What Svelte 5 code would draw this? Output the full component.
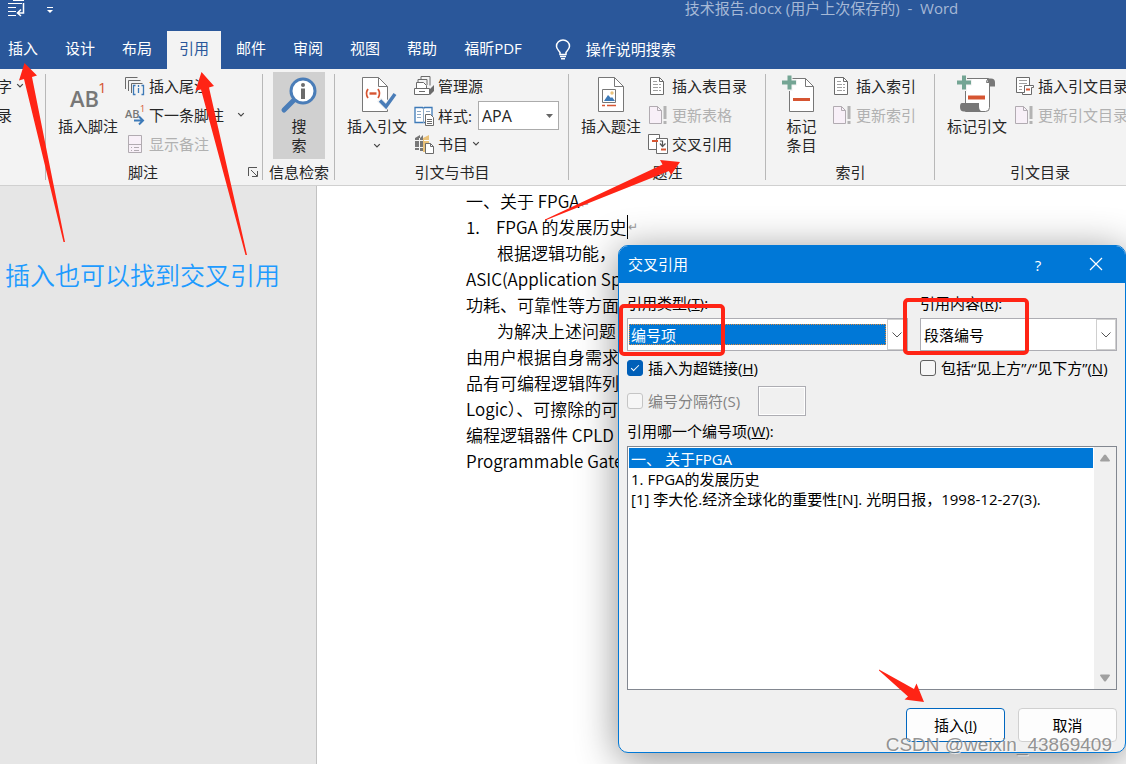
<script lang="ts">
	const tabs = ['插入', '设计', '布局', '引用', '邮件', '审阅', '视图', '帮助', '福昕PDF'];
	let activeTab = $state('引用');

	const items = [
		'一、 关于FPGA',
		'1. FPGA的发展历史',
		'[1] 李大伦.经济全球化的重要性[N]. 光明日报，1998-12-27(3).'
	];
	let selectedItem = $state(items[0]);

	let style = $state('APA');
	let refType = $state('编号项');
	let refContent = $state('段落编号');
	let asLink = $state(true);
	let withPosition = $state(false);
	let open = $state(true);

	function close() {
		open = false;
	}
</script>

{#snippet caret()}
	<svg class="caret" width="8" height="6" viewBox="0 0 8 6" aria-hidden="true">
		<path d="M1.2 1.2 4 4l2.800-2.800" fill="none" stroke="#444" stroke-width="1.200" />
	</svg>
{/snippet}

{#snippet pageIcon()}
	<svg width="20" height="20" viewBox="0 0 20 20" aria-hidden="true">
		<path d="M2.500 1.500h9l4 4v13h-13z" fill="#fff" stroke="#6b6b6b" />
		<path d="M11.500 1.500v4h4" fill="none" stroke="#6b6b6b" />
		<path d="M5 5.500h4M5 8.500h5M5 11.500h5M5 14.500h5M11 8.500h2M11 11.500h2M11 14.500h2" stroke="#a0a0a0" />
	</svg>
{/snippet}

{#snippet updateIcon()}
	<svg width="20" height="20" viewBox="0 0 20 20" aria-hidden="true">
		<path d="M1.500 1.500h8l4 4v13h-12z" fill="#f8f0f8" stroke="#b1abb1" />
		<path d="M9.500 1.500v4h4" fill="none" stroke="#b1abb1" />
		<path d="M15.500 1h3v13h-3zM15.500 16h3v3h-3z" fill="#b3b3b3" />
	</svg>
{/snippet}

<div class="word">
	<header>
		<div class="titlebar">
			<svg width="18" height="17" viewBox="0 0 18 17" aria-hidden="true">
				<path d="M5 .5h11M0 3.500h14M0 7.500h8M0 11.500h8M0 15.500h8" stroke="#fff" />
				<path d="M15.500 3v10h-5M13 9.500 9.500 13l3.500 3" fill="none" stroke="#fff" stroke-width="1.500" />
			</svg>
			<svg class="qat" width="8" height="8" viewBox="0 0 8 8" aria-hidden="true">
				<path d="M1 1.500h6" stroke="#fff" />
				<path d="M1 4h6L4 7z" fill="#fff" />
			</svg>
			<span class="title">技术报告.docx (用户上次保存的)&nbsp; -&nbsp; Word</span>
		</div>
		<nav>
			{#each tabs as tab}
				<button type="button" class="tab" class:active={tab === activeTab} onclick={() => (activeTab = tab)}>{tab}</button>
			{/each}
			<button type="button" class="tell-me">
				<svg width="16" height="21" viewBox="0 0 16 21" aria-hidden="true">
					<path d="M5 15.500v-2C3.500 11 1.500 10 1.500 7.200a6.500 6.200 0 0 1 13 0c0 2.800-2 3.800-3.500 6.300v2z" fill="none" stroke="#fff" stroke-width="1.500" />
					<path d="M5 17.500h6M6 19.700h4" stroke="#fff" stroke-width="1.500" />
				</svg>
				操作说明搜索
			</button>
		</nav>
	</header>

	<div class="ribbon">
		<section class="group cut">
			<div class="tools">
				<div class="small-col">
					<button type="button" class="small">字 {@render caret()}</button>
					<button type="button" class="small">录</button>
				</div>
			</div>
		</section>

		<section class="group">
			<div class="tools">
				<button type="button" class="large">
					<svg width="36" height="38" viewBox="0 0 36 38" aria-hidden="true">
						<text x="0" y="31" class="ab">AB</text>
						<text x="28" y="17" class="one">1</text>
					</svg>
					<span>插入脚注</span>
				</button>
				<div class="small-col">
					<button type="button" class="small">
						<svg width="20" height="20" viewBox="0 0 20 20" aria-hidden="true">
							<path d="M.5 13V1.500h12M3.500 15V4.500h12M6.500 17V7.500h11" fill="none" stroke="#6b6b6b" />
							<path d="M10.500 9.500h-2v9h2M16.500 9.500h2v9h-2M13.500 9v2M13.500 12v5" fill="none" stroke="#3d7ab8" stroke-width="1.300" />
						</svg>
						插入尾注
					</button>
					<button type="button" class="small">
						<svg width="20" height="20" viewBox="0 0 20 20" aria-hidden="true">
							<text x="0" y="13" class="ab-small">AB</text>
							<text x="15" y="7" class="one-small">1</text>
							<path d="M9 15.500h9M14 11.500l4 4-4 4" fill="none" stroke="#3d7ab8" stroke-width="2" />
						</svg>
						下一条脚注
						<span class="far">{@render caret()}</span>
					</button>
					<button type="button" class="small" disabled>
						<svg width="20" height="20" viewBox="0 0 20 20" aria-hidden="true">
							<path d="M3.500 1.500h13v17h-13zM3.500 10.500h13" fill="#f8f0f8" stroke="#b1abb1" />
							<path d="M6 13.500h1M9 13.500h5M6 16.500h1M9 16.500h5" stroke="#b1abb1" />
						</svg>
						显示备注
					</button>
				</div>
			</div>
			<div class="label with-launcher">
				<h2>脚注</h2>
				<button type="button" class="launcher" aria-label="脚注">
					<svg width="10" height="10" viewBox="0 0 10 10" aria-hidden="true">
						<path d="M.5 9V.5H9M3 3l6 6M9.500 4v5.500H4" fill="none" stroke="#555" />
					</svg>
				</button>
			</div>
		</section>

		<section class="group search-group">
			<div class="tools">
				<button type="button" class="large search">
					<svg width="38" height="38" viewBox="0 0 38 38" aria-hidden="true">
						<path d="M4 34 15 23" stroke="#4a7db8" stroke-width="5" stroke-linecap="round" />
						<circle cx="23" cy="15" r="12" fill="#fff" stroke="#4a7db8" stroke-width="3" />
						<circle cx="23" cy="9" r="2" fill="#6b6b6b" />
						<path d="M23 12.500v10.500" stroke="#6b6b6b" stroke-width="4" />
					</svg>
					<span>搜<br />索</span>
				</button>
			</div>
			<div class="label"><h2>信息检索</h2></div>
		</section>

		<section class="group">
			<div class="tools">
				<button type="button" class="large">
					<svg width="38" height="38" viewBox="0 0 38 38" aria-hidden="true">
						<path d="M4.500 1.500h16l9 9v25h-25z" fill="#fff" stroke="#777" />
						<path d="M20.500 1.500v9h9" fill="none" stroke="#777" />
						<path d="M10 13q-3 4.500 0 9M20 13q3 4.500 0 9" fill="none" stroke="#d65532" stroke-width="1.800" />
						<path d="M11.500 17.500h7" stroke="#d65532" stroke-width="2.400" />
						<path d="M21 23.500 28 30.500l10-13" fill="none" stroke="#f3f3f3" stroke-width="6" />
						<path d="M22 24.500 28 30.500l9-12.500" fill="none" stroke="#4a7db8" stroke-width="3.500" />
					</svg>
					<span>插入引文</span>
					{@render caret()}
				</button>
				<div class="small-col">
					<button type="button" class="small">
						<svg width="20" height="20" viewBox="0 0 20 20" aria-hidden="true">
							<path d="M7 3.500V.5h9v9M4 6V3.500h9V9" fill="none" stroke="#6b6b6b" />
							<path d="M2.500 12.500v-6h7l3 3v3" fill="#fff" stroke="#6b6b6b" />
							<path d="M.5 12.500h15v6H.5zM5 15.500h6" fill="#fff" stroke="#6b6b6b" />
							<path d="m16 13 4-4v6l-4 4z" fill="#6b6b6b" />
						</svg>
						管理源
					</button>
					<div class="small style-row">
						<svg width="20" height="20" viewBox="0 0 20 20" aria-hidden="true">
							<path d="M1 1.500h7.500l1 1 1-1H18v15H1z" fill="#fff" stroke="#3d7ab8" stroke-width="1.300" />
							<path d="M9.500 2v15M3 5.500h4M3 8.500h4M3 11.500h4M12 5.500h4" stroke="#8ea9c4" />
							<path d="M11.500 8.500h5l3 3v8h-8z" fill="#fff" stroke="#6b6b6b" />
							<path d="M13 13.500h5M13 15.500h5M13 17.500h5" stroke="#6b6b6b" />
						</svg>
						<label for="style">样式:</label>
						<div class="style-box">
							<select id="style" bind:value={style}>
								<option>APA</option>
							</select>
							<svg width="7" height="4" viewBox="0 0 7 4" aria-hidden="true"><path d="M0 0h7L3.500 4z" fill="#666" /></svg>
						</div>
					</div>
					<button type="button" class="small">
						<svg width="20" height="20" viewBox="0 0 20 20" aria-hidden="true">
							<path d="m1 4 5-3v15H1zM6 4l3-3v16H6z" fill="#777" />
							<path d="M1 6.500h8M1 13.500h8M5.500 4v12" stroke="#f3f3f3" />
							<path d="m9 4 6-3v17H9z" fill="#eac27a" />
							<path d="M10 6.500h5" stroke="#fff" />
							<path d="M11.500 9.500h5l3 3v7h-8z" fill="#fff" stroke="#6b6b6b" />
							<path d="M16.500 9.500v3h3" fill="none" stroke="#6b6b6b" />
						</svg>
						书目 {@render caret()}
					</button>
				</div>
			</div>
			<div class="label"><h2>引文与书目</h2></div>
		</section>

		<section class="group">
			<div class="tools">
				<button type="button" class="large">
					<svg width="38" height="38" viewBox="0 0 38 38" aria-hidden="true">
						<path d="M6.500 1.500h16l9 9v25h-25z" fill="#fff" stroke="#777" />
						<path d="M22.500 1.500v9h9" fill="none" stroke="#777" />
						<path d="M10.500 13.500h13v13h-13z" fill="#fff" stroke="#777" />
						<circle cx="20" cy="17" r="1.700" fill="#eac27a" />
						<path d="m12 25 4-6 3 3 1-1 3 4z" fill="#3d7ab8" />
						<path d="M10 29.500h3M15 29.500h9" stroke="#d65532" stroke-width="1.300" />
					</svg>
					<span>插入题注</span>
				</button>
				<div class="small-col">
					<button type="button" class="small">{@render pageIcon()}插入表目录</button>
					<button type="button" class="small" disabled>{@render updateIcon()}更新表格</button>
					<button type="button" class="small" onclick={() => (open = true)}>
						<svg width="20" height="20" viewBox="0 0 20 20" aria-hidden="true">
							<path d="M.5.5h11v15H.5z" fill="#fff" stroke="#6b6b6b" />
							<path d="M8.500 4.500h11v15h-11z" fill="#fff" stroke="#6b6b6b" />
							<path d="M4 7h6" stroke="#d65532" stroke-width="2" />
							<path d="M12 7h2.500v5M12 9.500l2.500 3 3-3" fill="none" stroke="#555" stroke-width="1.200" />
							<path d="M13 15.500h5" stroke="#d65532" stroke-width="2" />
						</svg>
						交叉引用
					</button>
				</div>
			</div>
			<div class="label"><h2>题注</h2></div>
		</section>

		<section class="group">
			<div class="tools">
				<button type="button" class="large narrow">
					<svg width="38" height="38" viewBox="0 0 38 38" aria-hidden="true">
						<path d="M6.500 2.500h16l8 8v25h-24z" fill="#fff" stroke="#777" />
						<path d="M22.500 2.500v8h8" fill="none" stroke="#777" />
						<path d="M10 23.500h17" stroke="#d65532" stroke-width="3" />
						<path d="M-1 6.500h15M6.500 0v15" stroke="#f3f3f3" stroke-width="6" />
						<path d="M-1 6.500h14M6.500-.5v14" stroke="#74a594" stroke-width="4" />
					</svg>
					<span>标记<br />条目</span>
				</button>
				<div class="small-col">
					<button type="button" class="small">{@render pageIcon()}插入索引</button>
					<button type="button" class="small" disabled>{@render updateIcon()}更新索引</button>
				</div>
			</div>
			<div class="label"><h2>索引</h2></div>
		</section>

		<section class="group last">
			<div class="tools">
				<button type="button" class="large">
					<svg width="38" height="38" viewBox="0 0 38 38" aria-hidden="true">
						<path d="M29 2.500h4q4 0 4 4v4h-6z" fill="#777" />
						<path d="M7.500 2.500h23q-2 1-2 4l3 0v25q0 4-4 4h-20z" fill="#fff" stroke="#777" />
						<path d="M4 27h17v4q0 4.500 5 4.500H6q-4 0-4-4.500 0-4 2-4z" fill="#777" />
						<path d="M10 21.500h17" stroke="#d65532" stroke-width="4" />
						<path d="M-1 6.500h15M6 0v15" stroke="#f3f3f3" stroke-width="6" />
						<path d="M-1 6.500h14M6-.5v14" stroke="#74a594" stroke-width="4" />
					</svg>
					<span>标记引文</span>
				</button>
				<div class="small-col">
					<button type="button" class="small">
						<svg width="20" height="20" viewBox="0 0 20 20" aria-hidden="true">
							<path d="M2.500 1.500h13v15h-13z" fill="#fff" stroke="#6b6b6b" />
							<path d="M5 4.500h8M5 7.500h8M5 10.500h3M5 13.500h3" stroke="#a0a0a0" />
							<path d="M10.500 9.500h9v2h-2v7h-9v-2h2z" fill="#fff" stroke="#6b6b6b" />
							<path d="M12 13.500h4" stroke="#d65532" stroke-width="2" />
						</svg>
						插入引文目录
					</button>
					<button type="button" class="small" disabled>{@render updateIcon()}更新引文目录</button>
				</div>
			</div>
			<div class="label"><h2>引文目录</h2></div>
		</section>
	</div>

	<main>
		<article>
			<p>一、关于 FPGA<span class="mark">↵</span></p>
			<p class="numbered"><span>1.</span>FPGA 的发展历史<i class="cursor"></i><span class="mark">↵</span></p>
			<p class="indent">根据逻辑功能，</p>
			<p>ASIC(Application Spe</p>
			<p>功耗、可靠性等方面</p>
			<p class="indent">为解决上述问题</p>
			<p>由用户根据自身需求</p>
			<p>品有可编程逻辑阵列</p>
			<p>Logic）、可擦除的可</p>
			<p>编程逻辑器件 CPLD</p>
			<p>Programmable Gate</p>
		</article>
	</main>

	{#if open}
		<div class="dialog" role="dialog" aria-labelledby="dialog-title">
			<div class="dialog-head">
				<h1 id="dialog-title">交叉引用</h1>
				<button type="button">?</button>
				<button type="button" aria-label="取消" onclick={close}>
					<svg width="14" height="14" viewBox="0 0 14 14" aria-hidden="true">
						<path d="m1 1 12 12M13 1 1 13" stroke="#fff" stroke-width="1.200" />
					</svg>
				</button>
			</div>
			<form class="dialog-body" onsubmit={(e) => e.preventDefault()}>
				<div class="columns">
					<label for="ref-type">引用类型(<u>T</u>):</label>
					<label for="ref-content">引用内容(<u>R</u>):</label>
					<div class="combo focused">
						<select id="ref-type" bind:value={refType}>
							<option>编号项</option>
						</select>
						<span class="drop">
							<svg width="10" height="6" viewBox="0 0 10 6" aria-hidden="true"><path d="m.5.5 4.500 4.500L9.500.5" fill="none" stroke="#555" /></svg>
						</span>
					</div>
					<div class="combo">
						<select id="ref-content" bind:value={refContent}>
							<option>段落编号</option>
						</select>
						<span class="drop">
							<svg width="10" height="6" viewBox="0 0 10 6" aria-hidden="true"><path d="m.5.5 4.500 4.500L9.500.5" fill="none" stroke="#555" /></svg>
						</span>
					</div>
					<label class="check"><input type="checkbox" bind:checked={asLink} /><span>插入为超链接(<u>H</u>)</span></label>
					<label class="check"><input type="checkbox" bind:checked={withPosition} /><span>包括“见上方”/“见下方”(<u>N</u>)</span></label>
				</div>
				<div class="separator-row">
					<label class="check off"><input type="checkbox" disabled /><span>编号分隔符(S)</span></label>
					<input class="separator" type="text" disabled aria-label="编号分隔符" />
				</div>
				<label class="list-label" for="items">引用哪一个编号项(<u>W</u>):</label>
				<div class="list">
					<select id="items" size="12" bind:value={selectedItem}>
						{#each items as item}
							<option value={item}>{item}</option>
						{/each}
					</select>
					<div class="scroll" aria-hidden="true">
						<svg width="10" height="8" viewBox="0 0 10 8"><path d="M4 1q1-1 2 0l4 5.500q0 1-1 1H1q-1 0-1-1z" fill="#a0a0a0" /></svg>
						<svg width="10" height="8" viewBox="0 0 10 8"><path d="M4 7q1 1 2 0l4-5.500q0-1-1-1H1q-1 0-1 1z" fill="#a0a0a0" /></svg>
					</div>
				</div>
				<div class="actions">
					<button type="submit" class="primary">插入(<u>I</u>)</button>
					<button type="button" onclick={close}>取消</button>
				</div>
			</form>
		</div>
	{/if}

	<p class="note">插入也可以找到交叉引用</p>
	<svg class="marks" width="1126" height="764" viewBox="0 0 1126 764" aria-hidden="true">
		<g fill="#ff2415">
			<path d="M24.500 63 37 75.500l-5 1.500L65 242h-1.500L24 79l-5 1.500z" />
			<path d="m201.500 72 12.500 14-5 1.500L247 255h-1.500L201 89.500l-5.500 1z" />
			<path d="m680 162-20-2 2.500 4.500L545 219.500v1L669 171l2 4z" />
			<path d="m924 702-7.500-18.500-2.500 5.500-35-19.500v1l29 26-3.500 3z" />
		</g>
		<g fill="none" stroke="#ff2415" stroke-width="4">
			<rect x="621" y="306" width="102" height="48" rx="3" />
			<rect x="905" y="300" width="122" height="53" rx="3" />
		</g>
	</svg>
	<p class="watermark">CSDN @weixin_43869409</p>
</div>

<style>
	:global(body) {
		margin: 0;
	}

	.word {
		position: relative;
		display: flex;
		flex-direction: column;
		min-height: 100vh;
		overflow: hidden;
		background: #e6e6e6;
		color: #262626;
		font-family: "Open Sans", "Noto Sans CJK SC", sans-serif;
		font-size: 15px;
		line-height: 20px;
	}

	h1, h2, p {
		margin: 0;
		font-size: inherit;
		font-weight: inherit;
	}

	button, select, input {
		font: inherit;
		color: inherit;
		margin: 0;
	}

	button {
		padding: 0;
		border: none;
		background: none;
		cursor: pointer;
		white-space: nowrap;
	}

	svg {
		flex: none;
		overflow: visible;
	}

	header {
		background: #2a579a;
		color: #fff;
	}

	.titlebar {
		display: flex;
		align-items: flex-start;
		height: 31px;
		padding-left: 8px;
	}

	.qat {
		margin: 6px 0 0 20px;
	}

	.title {
		flex: 1;
		padding-left: 463px;
		text-align: center;
		color: #a6b9d6;
		line-height: 17px;
		white-space: nowrap;
	}

	nav {
		display: flex;
		gap: 3px;
		margin-left: -4px;
		height: 38px;
	}

	.tab {
		padding: 0 12px 4px;
	}

	.tab.active {
		background: #f3f3f3;
		color: #2a579a;
	}

	.tell-me {
		display: flex;
		align-items: center;
		gap: 15px;
		margin-left: 18px;
		padding-bottom: 2px;
	}

	.ribbon {
		display: grid;
		grid-template-columns: 46px 217px 72px 234px 197px 169px 210px;
		background: #f3f3f3;
		border-bottom: 1px solid #d0d0d0;
		overflow: hidden;
	}

	.group {
		padding: 3px 0 0 12px;
		background: linear-gradient(#b8b8b8, #b8b8b8) no-repeat right 0 top 5px / 1px 106px;
	}

	.group.cut {
		padding-left: 0;
		margin-left: -3px;
	}

	.group.search-group {
		padding-left: 10px;
	}

	.group.last {
		background: none;
	}

	.tools {
		display: flex;
		gap: 7px;
		height: 87px;
	}

	.large {
		display: flex;
		flex-direction: column;
		align-items: center;
		width: 60px;
		padding-top: 4px;
		line-height: 19px;
	}

	.large span {
		padding-top: 3px;
	}

	.large .caret {
		margin-top: 7px;
	}

	.large.narrow {
		width: 47px;
	}

	.large.search {
		width: 52px;
		background: #d0d0d0;
	}

	.small-col {
		display: flex;
		flex-direction: column;
	}

	.small {
		display: flex;
		align-items: center;
		gap: 4px;
		box-sizing: border-box;
		height: 29px;
		padding-bottom: 2px;
	}

	.small:disabled {
		color: #b1b1b1;
	}

	.far {
		display: flex;
		margin-left: 9px;
	}

	.ab, .ab-small {
		fill: #777;
		font-size: 22px;
		font-weight: 600;
	}

	.ab-small {
		font-size: 11px;
	}

	.one, .one-small {
		fill: #d65532;
		font-size: 15px;
	}

	.one-small {
		font-size: 9px;
	}

	.style-box {
		display: flex;
		align-items: center;
		width: 79px;
		height: 27px;
		margin-left: 2px;
		background: #fff;
		border: 1px solid #ababab;
	}

	.style-row {
		padding-bottom: 0;
	}

	.style-box select {
		flex: 1;
		min-width: 0;
		padding: 0 3px;
		border: none;
		background: none;
		font-size: 16px;
		appearance: none;
	}

	.style-box svg {
		margin-right: 5px;
	}

	.label {
		display: flex;
		justify-content: center;
		margin-left: -12px;
		line-height: 27px;
		height: 26px;
	}

	.search-group .label {
		margin-left: -10px;
	}

	.with-launcher {
		justify-content: flex-end;
		align-items: center;
		gap: 90px;
		padding-right: 5px;
	}

	.launcher {
		display: flex;
	}

	main {
		flex: 1;
		display: flex;
		padding-left: 316px;
	}

	article {
		flex: 1;
		padding: 2px 0 0 149px;
		border-left: 1px solid #c2c2c2;
		background: #fff;
		color: #000;
		font-family: "Noto Sans CJK SC", sans-serif;
		font-weight: 350;
		font-size: 17px;
		line-height: 26px;
		white-space: nowrap;
	}

	article p {
		height: 26px;
	}

	.indent {
		padding-left: 31px;
	}

	.numbered {
		display: flex;
		align-items: center;
	}

	.numbered span:first-child {
		width: 30px;
	}

	.mark {
		color: #999;
		font-family: "DejaVu Sans", sans-serif;
		font-size: 12px;
		line-height: 20px;
	}

	.cursor {
		width: 1px;
		height: 24px;
		background: #000;
	}

	.dialog {
		position: absolute;
		top: 245px;
		right: 0;
		width: 506px;
		border: 1px solid #0078d7;
		border-radius: 10px;
		overflow: hidden;
		background: #f0f0f0;
		color: #000;
		box-shadow: 0 6px 40px rgba(0, 0, 0, .45);
	}

	.dialog-head {
		display: flex;
		align-items: center;
		height: 37px;
		padding-left: 9px;
		background: #0078d7;
		color: #fff;
	}

	.dialog-head h1 {
		flex: 1;
		line-height: 18px;
		padding-bottom: 2px;
	}

	.dialog-head button {
		width: 58px;
		height: 100%;
	}

	.dialog-body {
		padding: 6px 8px 10px;
	}

	.columns {
		display: grid;
		grid-template-columns: 281px 1fr;
		column-gap: 12px;
		line-height: 29px;
	}

	.combo {
		display: flex;
		align-items: center;
		height: 31px;
		border: 1px solid #adadb3;
		background: #fff;
	}

	.combo select {
		flex: 1;
		min-width: 0;
		height: 21px;
		margin-left: 1px;
		padding: 0 2px;
		border: none;
		border-radius: 0;
		background: none;
		line-height: 20px;
		appearance: none;
	}

	.combo.focused select {
		background: #0078d7;
		color: #fff;
		outline: 1px dotted #e08a3c;
		outline-offset: -1px;
	}

	.drop {
		display: flex;
		align-items: center;
		justify-content: center;
		width: 18px;
		height: 29px;
		margin-left: 1px;
		border: 1px solid #cfcfcf;
	}

	.check {
		display: flex;
		align-items: center;
		gap: 5px;
		height: 34px;
		white-space: nowrap;
	}

	.check input {
		flex: none;
		width: 16px;
		height: 16px;
		box-sizing: border-box;
		border: 1px solid #5f5f5f;
		border-radius: 3px;
		background: #f6f6f6;
		appearance: none;
	}

	.check input:checked {
		border-color: #005fb8;
		background: #005fb8;
		display: grid;
		place-items: center;
	}

	.check input:checked::after {
		content: "";
		width: 7px;
		height: 3px;
		border: solid #fff;
		border-width: 0 0 1px 1px;
		transform: translateY(-1px) rotate(-45deg);
	}

	.check.off {
		color: #838383;
		height: 31px;
	}

	.check.off input {
		border-color: #c5c5c5;
	}

	.separator-row {
		display: flex;
		align-items: center;
		gap: 18px;
	}

	.separator {
		box-sizing: border-box;
		width: 48px;
		height: 30px;
		border: 1px solid #adadb3;
		background: #f0f0f0;
		box-shadow: inset 0 0 0 1px #fff;
	}

	.list-label {
		display: block;
		line-height: 30px;
	}

	.list {
		display: flex;
		height: 242px;
		border: 1px solid #828790;
		background: #fff;
	}

	.list select {
		flex: 1;
		min-width: 0;
		padding: 1px;
		border: none;
		outline: none;
		background: #fff;
		overflow: hidden;
	}

	.list option {
		box-sizing: border-box;
		height: 20px;
		min-height: 20px;
		padding: 0 2px;
		line-height: 18px;
		color: #000;
	}

	.list option:checked {
		background: #0078d7 linear-gradient(#0078d7, #0078d7);
		color: #fff;
	}

	.scroll {
		display: flex;
		flex-direction: column;
		justify-content: space-between;
		align-items: center;
		width: 22px;
		padding: 7px 0;
		box-sizing: border-box;
		background: #f0f0f0;
	}

	.actions {
		display: flex;
		justify-content: flex-end;
		gap: 13px;
		padding-top: 18px;
	}

	.actions button {
		width: 99px;
		height: 34px;
		border: 1px solid #d0d0d0;
		border-radius: 4px;
		background: #fdfdfd;
	}

	.actions .primary {
		border-color: #0067c0;
	}

	.note {
		position: absolute;
		top: 256px;
		left: 5px;
		color: #1e9bff;
		font-family: "Noto Sans CJK SC", sans-serif;
		font-weight: 350;
		font-size: 25px;
		line-height: 36px;
	}

	.marks {
		position: absolute;
		top: 0;
		left: 0;
		pointer-events: none;
	}

	.watermark {
		position: absolute;
		right: 14px;
		bottom: 8px;
		color: rgba(120, 120, 120, .8);
		font-family: "Liberation Sans", sans-serif;
		font-size: 19px;
		line-height: 22px;
		text-shadow: 1px 1px 0 rgba(255, 255, 255, .7);
		pointer-events: none;
	}
</style>
